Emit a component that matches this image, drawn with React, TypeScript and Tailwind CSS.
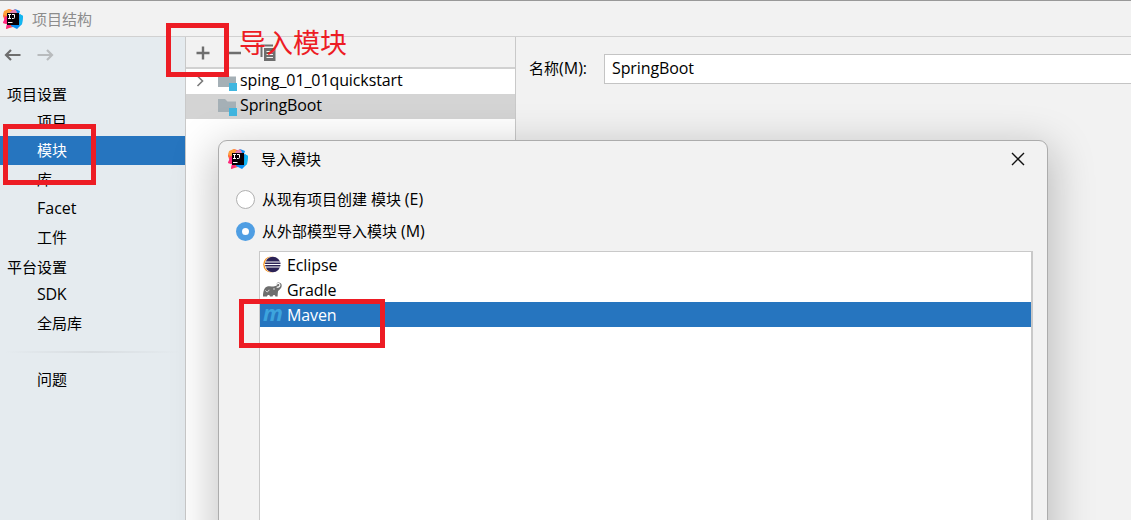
import React from 'react';

const NAV_ITEMS = [
  { label: '项目' },
  { label: '模块', active: true },
  { label: '库' },
  { label: 'Facet', latin: true },
  { label: '工件' },
];

const ProductLogo: React.FC = () => (
  <svg className="w-5 h-5 shrink-0" viewBox="0 0 20 20">
    <path d="M1 3 6 0 12 2 10 18 3 20 4 15 0 14 2 10 0 7Z" fill="#ff4b55" />
    <path d="M1 2 6 0 11 3 8 9 3 9 0 7Z" fill="#ffa23a" />
    <path d="M0 6 4 7 4 10 1 10Z" fill="#ff6a3a" />
    <path d="M2 8 6 6 7 18 3 20 4 15 0 14Z" fill="#ff2580" />
    <path d="M8 3 12 0 17 2 16 5 20 7 19 15 14 20 8 17Z" fill="#0b8ff5" />
    <path d="M7 3 12 0 14 3 13 6 8 7Z" fill="#e87fb0" />
    <path d="M17 5 20 7 19 15 16 17Z" fill="#12b7ef" />
    <path d="M4 4h12v12H4z" fill="#080006" />
    <path d="M5 5.500h3M6.500 5.500v4M5 9.500h3M9 5.500h2.500v3q0 1-1 1H9M5 13.500h4.500" fill="none" stroke="#fff" strokeWidth="1" />
  </svg>
);

const ModuleFolder: React.FC = () => (
  <svg className="w-5 h-[19px] shrink-0" viewBox="0 0 20 19">
    <path d="M0 2h7l2.500 2.500H18V15H0z" fill="#a5b0b6" />
    <path d="M11 11h8v8h-8z" fill="#40b6e0" />
  </svg>
);

const EclipseIcon: React.FC = () => (
  <svg className="w-[19px] h-[18px] shrink-0" viewBox="0 0 19 18">
    <circle cx="8.200" cy="8.500" r="8" fill="#f7941e" />
    <circle cx="9.800" cy="8.500" r="8.200" fill="#fff" />
    <circle cx="9.800" cy="8.500" r="7.800" fill="#2c2255" />
    <path d="M2 6h16M1.500 8.500h17M2 11h16" stroke="#fff" strokeWidth="1" />
  </svg>
);

const GradleIcon: React.FC = () => (
  <svg className="w-[19px] h-[18px] shrink-0" viewBox="0 0 19 18">
    <path d="M0 15.5C0 10 1.500 6 5 5.300c3-.6 5 .7 7.400-.2 1.600-.6 1.800-1 1.400-1.800C12.800 1 18.700.5 18.700 4.400c0 3.600-3.400 4.400-3.700 6.200-.2 1.500-.4 3-.4 4.900h-2.200c-.1-2-2.600-2-2.800 0H7c-.2-2-2.800-2-3 0z" fill="#6e6e6e" />
    <path d="M14 3.200c.5-1.100 3-.9 2.900 1 0 1.500-1.600 2-3.300 2" fill="none" stroke="#fff" strokeWidth="1.1" />
    <path d="M2.500 9.500c1.200 2 3.100 1.400 3.500-.7" fill="none" stroke="#fff" strokeWidth=".8" />
    <circle cx="11" cy="8" r=".7" fill="#fff" />
  </svg>
);

const Sidebar: React.FC = () => (
  <aside className="w-[186px] shrink-0 bg-[#e5ebef] border-r border-[#c9c9c9]">
    <div className="flex items-center gap-4 h-9 pl-1">
      <svg className="w-[17px] h-3" viewBox="0 0 17 12" fill="none" stroke="#6e6e6e" strokeWidth="2.2">
        <path d="M16.500 6H2M7 1 2 6l5 5" />
      </svg>
      <svg className="w-[17px] h-3" viewBox="0 0 17 12" fill="none" stroke="#b8bbbd" strokeWidth="2.2">
        <path d="M.5 6H15M10 1l5 5-5 5" />
      </svg>
    </div>
    <div className="flex items-center h-[34px] mt-1 pl-[7px]">项目设置</div>
    <nav className="-mt-[4px]">
      {NAV_ITEMS.map((item) => (
        <div
          key={item.label}
          className={`flex items-center h-[29px] pb-0.5 pl-[37px] ${item.latin ? 'text-base' : ''} ${
            item.active ? 'bg-[#2675bf] text-white' : ''
          }`}
        >
          {item.label}
        </div>
      ))}
    </nav>
    <div className="flex items-center h-[29px] pl-[7px]">平台设置</div>
    <div className="flex items-center h-[27px] pb-0.5 pl-[37px] text-base tracking-[-0.3px]">SDK</div>
    <div className="flex items-center h-[29px] pl-[37px]">全局库</div>
    <div className="h-0.5 mt-[14px] mx-1 bg-gradient-to-r from-transparent via-[#d8dde1] to-transparent" />
    <div className="flex items-center h-[29px] mt-[11px] pl-[37px]">问题</div>
  </aside>
);

const ModuleTree: React.FC = () => (
  <section className="w-[330px] shrink-0 bg-white border-r border-[#c9c9c9]">
    <div className="flex items-center h-8 bg-[#f2f2f2] border-b-2 border-[#d1d1d1]">
      <svg className="w-[96px] h-[30px]" viewBox="186 37 96 30" fill="none">
        <path d="M196.500 53h13M203 46.500v13M228 53h13" stroke="#6e6e6e" strokeWidth="2.4" />
        <path d="M261.500 57V45.500H273" stroke="#6e6e6e" strokeWidth="2" />
        <path d="M264 48h11.500v13H264z" fill="#6e6e6e" />
        <path d="M266.500 51.500h6.500M266.500 54.500h6.500M266.500 57.500h6.500" stroke="#f2f2f2" strokeWidth="1" />
      </svg>
    </div>
    <div className="flex items-center h-[25px] pl-[10px]">
      <svg className="w-2 h-3 mr-[14px] mb-0.5" viewBox="0 0 8 12" fill="none" stroke="#7a7a7a" strokeWidth="1.6">
        <path d="M1.500 1 6.500 6l-5 5" />
      </svg>
      <ModuleFolder />
      <span className="ml-[2px] mb-1 text-base leading-5 tracking-[-0.1px]">sping_01_01quickstart</span>
    </div>
    <div className="flex items-center h-[25px] pl-8 bg-[#d4d4d4]">
      <ModuleFolder />
      <span className="ml-[2px] mb-1 text-base leading-5 tracking-[-0.1px]">SpringBoot</span>
    </div>
  </section>
);

const ImportDialog: React.FC = () => (
  <div className="absolute left-[218px] top-[140px] w-[830px] h-[420px] bg-[#f2f2f2] border border-[#acacac] rounded-[9px] shadow-[0_12px_42px_6px_rgba(0,0,0,0.22)]">
    <div className="flex items-center h-9 pl-[9px] pr-[22px]">
      <ProductLogo />
      <span className="ml-[13px]">导入模块</span>
      <svg className="w-[14px] h-[14px] ml-auto" viewBox="0 0 14 14" stroke="#111" strokeWidth="1.4">
        <path d="m1 1 12 12M13 1 1 13" />
      </svg>
    </div>
    <div className="flex items-center h-8 mt-[6px] pl-[17px]">
      <span className="w-[19px] h-[19px] rounded-full border border-[#b0b0b0] bg-white" />
      <span className="ml-[7px]">
        从现有项目创建 模块 <span className="text-base leading-5">(E)</span>
      </span>
    </div>
    <div className="flex items-center h-8 pl-[17px]">
      <span className="w-[19px] h-[19px] rounded-full border-[6px] border-[#4f9ee3] bg-white" />
      <span className="ml-[7px]">
        从外部模型导入模块 <span className="text-base leading-5">(M)</span>
      </span>
    </div>
    <div className="w-[774px] h-[300px] mt-1 ml-10 bg-white border border-[#c9c9c9] border-r-2 text-base tracking-[-0.1px]">
      <div className="flex items-center h-[25px] pl-[3px]">
        <EclipseIcon />
        <span className="ml-[5px]">Eclipse</span>
      </div>
      <div className="flex items-center h-[25px] pl-[3px]">
        <GradleIcon />
        <span className="ml-[5px]">Gradle</span>
      </div>
      <div className="flex items-center h-[25px] pl-[3px] bg-[#2675bf] text-white">
        <span className="w-[19px] -mt-[5px] text-[22px] leading-5 font-bold italic text-[#3da4dd]">m</span>
        <span className="ml-[5px]">Maven</span>
      </div>
    </div>
  </div>
);

export default function App() {
  return (
    <div className="relative flex flex-col w-[1131px] h-[520px] overflow-hidden bg-[#f2f2f2] text-black text-[15px] leading-[20px] whitespace-nowrap font-['Open_Sans','Noto_Sans_CJK_SC',sans-serif]">
      <header className="flex items-center h-[37px] shrink-0 pl-[3px] border-t border-b border-t-[#999] border-b-[#d1d1d1] text-[#8c8c8c]">
        <ProductLogo />
        <span className="ml-[9px]">项目结构</span>
      </header>
      <main className="flex flex-1 min-h-0">
        <Sidebar />
        <ModuleTree />
        <section className="flex-1 pt-[17px] pl-[13px]">
          <div className="flex items-center">
            <label className="w-[75px] mb-0.5">
              名称<span className="text-base leading-5">(M):</span>
            </label>
            <div className="flex items-center flex-1 h-[30px] pl-[7px] bg-white border border-r-0 border-[#c4c4c4]">
              <span className="mb-0.5 text-base leading-5 tracking-[-0.1px]">SpringBoot</span>
            </div>
          </div>
        </section>
      </main>

      <ImportDialog />

      {/* Annotations */}
      <div className="absolute left-[166px] top-[23px] w-[63px] h-[54px] border-[5px] border-[#ed1c24]" />
      <div className="absolute left-[3px] top-[124px] w-[93px] h-[61px] border-[5px] border-[#ed1c24]" />
      <div className="absolute left-[239px] top-[299px] w-[146px] h-[49px] border-[5px] border-[#ed1c24]" />
      <div className="absolute left-[239px] top-[25px] text-[27px] leading-9 text-[#ed1c24]">导入模块</div>
    </div>
  );
}
